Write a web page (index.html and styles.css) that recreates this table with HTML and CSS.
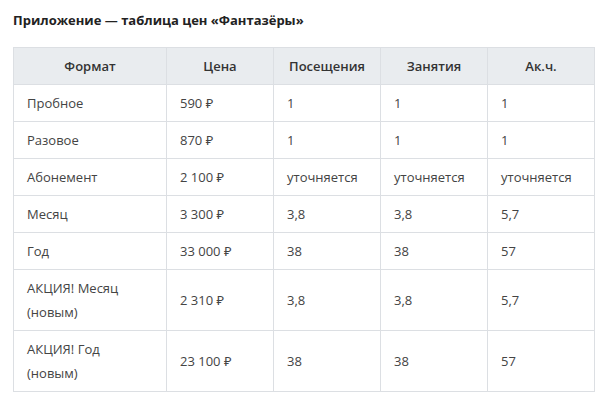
FILE: index.html
```html
<!DOCTYPE html>
<html lang="ru">
<head>
<meta charset="utf-8">
<link rel="stylesheet" href="styles.css">
</head>
<body>
<div class="page">
  <h3 class="title">Приложение — таблица цен «Фантазёры»</h3>
  <table class="prices">
    <colgroup>
      <col class="c-wide"><col class="c-narrow"><col class="c-narrow"><col class="c-narrow"><col class="c-narrow">
    </colgroup>
    <thead>
      <tr><th>Формат</th><th>Цена</th><th>Посещения</th><th>Занятия</th><th>Ак.ч.</th></tr>
    </thead>
    <tbody>
      <tr><td>Пробное</td><td>590 ₽</td><td>1</td><td>1</td><td>1</td></tr>
      <tr><td>Разовое</td><td>870 ₽</td><td>1</td><td>1</td><td>1</td></tr>
      <tr><td>Абонемент</td><td>2 100 ₽</td><td>уточняется</td><td>уточняется</td><td>уточняется</td></tr>
      <tr><td>Месяц</td><td>3 300 ₽</td><td>3,8</td><td>3,8</td><td>5,7</td></tr>
      <tr><td>Год</td><td>33 000 ₽</td><td>38</td><td>38</td><td>57</td></tr>
      <tr><td>АКЦИЯ! Месяц (новым)</td><td>2 310 ₽</td><td>3,8</td><td>3,8</td><td>5,7</td></tr>
      <tr><td>АКЦИЯ! Год (новым)</td><td>23 100 ₽</td><td>38</td><td>38</td><td>57</td></tr>
    </tbody>
  </table>
</div>
</body>
</html>
```
FILE: styles.css
```css
html, body {
  margin: 0;
  padding: 0;
  background: #ffffff;
}
.page {
  padding: 10px 13px;
  font-family: "Open Sans", "Noto Sans", sans-serif;
  color: #3a3a3a;
}
.title {
  margin: 0 0 17px 0;
  font-size: 13px;
  line-height: 20px;
  font-weight: 700;
  color: #222;
}
.prices {
  border-collapse: collapse;
  table-layout: fixed;
  width: 582px;
  font-size: 13px;
  line-height: 24px;
}
.c-wide { width: 153px; }
.c-narrow { width: 107px; }
.prices th, .prices td {
  border: 1px solid #dcdfe3;
  padding: 6px 13px;
  vertical-align: middle;
}
.prices th {
  background: #e9ecef;
  font-weight: 600;
  text-align: center;
  color: #333;
}
.prices td {
  text-align: left;
  color: #444;
}
```
